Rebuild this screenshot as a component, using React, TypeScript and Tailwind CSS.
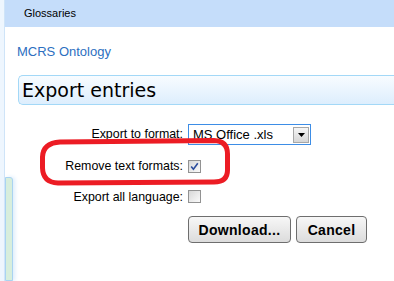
import React from 'react';

// small checkbox in the old XP look
const Check = ({ checked }: { checked?: boolean }) => (
  <span className="w-[13px] h-[13px] border border-[#929292] bg-gradient-to-br from-[#d8d8d8] to-[#fafafa] flex items-center justify-center">
    {checked && (
      <svg width="9" height="9" viewBox="0 0 9 9">
        <path d="M1.2 4.6 L3.4 7.2 L7.8 1.2" stroke="#2b4c9c" strokeWidth="1.6" fill="none" />
      </svg>
    )}
  </span>
);

const Btn = ({ label, w }: { label: string; w: string }) => (
  <button
    className={`${w} h-[27px] rounded-[4px] border border-[#6e6e6e] bg-gradient-to-b from-[#f7f7f7] to-[#dcdcdc] text-[14px] font-bold text-black leading-none tracking-[0.3px]`}
  >
    {label}
  </button>
);

function App() {
  return (
    <div className="relative w-[394px] h-[281px] overflow-hidden bg-white flex font-['Liberation_Sans',Arial,sans-serif]">
      {/* left gutter */}
      <div className="w-[5px] bg-[#eef6fe] border-r border-[#cfe4f8]" />

      <div className="flex-1 flex flex-col">
        {/* Header */}
        <header className="h-[27px] bg-[#c5ddfa] flex items-center pl-[19px]">
          <span className="text-[11px] text-black">Glossaries</span>
        </header>

        <div className="flex-1 flex">
          {/* side panel edge */}
          <div className="w-[8px] flex flex-col">
            <div className="flex-1" />
            <div className="h-[104px] bg-[#d7eedd] border border-[#a9d3f1] rounded-tr-[3px] shadow-[2px_0_4px_#dcecfb]" />
          </div>

          <main className="flex-1 flex flex-col pl-[4px] pt-[17px]">
            <h2 className="text-[13px] leading-[15px] text-[#2d6fbf]">MCRS Ontology</h2>

            <div className="mt-[16px] ml-[1px] h-[30px] border border-r-0 border-[#a3d8f7] rounded-l-[5px] bg-gradient-to-b from-[#f8fcff] to-[#ddeefd] flex items-center pl-[3px]">
              <span className="font-['DejaVu_Sans',sans-serif] text-[19px] text-black leading-none">Export entries</span>
            </div>

            {/* Form */}
            <div className="mt-[19px] grid grid-cols-[166px_auto] gap-x-[5px] items-center text-[12.4px] text-black">
              <label className="text-right">Export to format:</label>
              <div className="w-[123px] h-[21px] border border-[#3d8de6] bg-white flex items-center justify-between pl-[4px] pr-[1px]">
                <span className="text-[13px]">MS Office .xls</span>
                <span className="w-[16px] h-[16px] border border-[#a7a7a7] bg-gradient-to-b from-[#f6f6f6] to-[#d6d6d6] flex items-center justify-center">
                  <svg width="7" height="4" viewBox="0 0 7 4">
                    <path d="M0 0 H7 L3.5 4 Z" fill="#000" />
                  </svg>
                </span>
              </div>

              <label className="text-right mt-[12px]">Remove text formats:</label>
              <div className="mt-[12px]">
                <Check checked />
              </div>

              <label className="text-right mt-[12px]">Export all language:</label>
              <div className="mt-[12px]">
                <Check />
              </div>

              <div />
              <div className="mt-[10px] flex gap-[5px]">
                <Btn label="Download..." w="w-[103px]" />
                <Btn label="Cancel" w="w-[71px]" />
              </div>
            </div>
          </main>
        </div>
      </div>

      {/* red annotation drawn over the form */}
      <svg className="absolute left-0 top-0 pointer-events-none" width="394" height="281">
        <path
          d="M60 142 L214 140.5 Q227.5 141 227.5 154 L227.5 170 Q227.5 182 214 182 L58 183 Q43 182.5 42.5 168 L42.5 157 Q43 143 60 142 Z"
          stroke="#ec1c24"
          strokeWidth="5"
          fill="none"
        />
      </svg>
    </div>
  );
}

export default App;
